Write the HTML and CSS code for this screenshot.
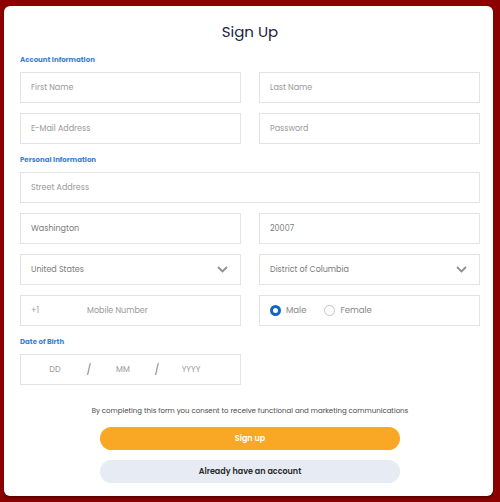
FILE: index.html
```html
<!DOCTYPE html>
<html lang="en">
<head>
    <meta charset="UTF-8">
    <title>Sign Up</title>
    <link rel="stylesheet" href="styles.css">
</head>
<body>
    <div class="card">
        <h1 class="title">Sign Up</h1>
        <form class="form">
            <div class="label">Account Information</div>
            <div class="row">
                <input class="field" type="text" placeholder="First Name">
                <input class="field" type="text" placeholder="Last Name">
            </div>
            <div class="row">
                <input class="field" type="text" placeholder="E-Mail Address">
                <input class="field" type="password" placeholder="Password">
            </div>

            <div class="label">Personal Information</div>
            <div class="row one">
                <input class="field" type="text" placeholder="Street Address">
            </div>
            <div class="row">
                <input class="field" type="text" value="Washington">
                <input class="field" type="text" value="20007">
            </div>
            <div class="row">
                <div class="field select">
                    <span>United States</span>
                    <svg width="11" height="7" viewBox="0 0 11 7"><path d="M1 1l4.5 4.5L10 1" fill="none" stroke="#8a8f99" stroke-width="1.8"/></svg>
                </div>
                <div class="field select">
                    <span>District of Columbia</span>
                    <svg width="11" height="7" viewBox="0 0 11 7"><path d="M1 1l4.5 4.5L10 1" fill="none" stroke="#8a8f99" stroke-width="1.8"/></svg>
                </div>
            </div>
            <div class="row">
                <div class="field phone">
                    <span class="code">+1</span>
                    <span>Mobile Number</span>
                </div>
                <div class="field gender">
                    <label class="radio"><span class="dot on"></span>Male</label>
                    <label class="radio"><span class="dot"></span>Female</label>
                </div>
            </div>

            <div class="label">Date of Birth</div>
            <div class="row">
                <div class="field dob">
                    <span>DD</span>
                    <span class="slash">/</span>
                    <span>MM</span>
                    <span class="slash">/</span>
                    <span>YYYY</span>
                </div>
            </div>

            <p class="consent">By completing this form you consent to receive functional and marketing communications</p>
            <div class="btns">
                <button type="button" class="btn primary">Sign up</button>
                <button type="button" class="btn second">Already have an account</button>
            </div>
        </form>
    </div>
</body>
</html>
```

FILE: styles.css
```css
* {
    padding: 0;
    margin: 0;
    box-sizing: border-box;
}
body {
    background: #8b0000;
    font-family: "Poppins", "Open Sans", "DejaVu Sans", sans-serif;
    padding: 6px 7px 6px 4px;
}
.card {
    background: #fff;
    border-radius: 6px;
    box-shadow: 0 2px 2px rgba(0,0,0,.35);
    height: 490px;
    padding: 14px 13px 0 16px;
}
.title {
    text-align: center;
    font-size: 15px;
    font-weight: 400;
    color: #1d2340;
    line-height: 24px;
    margin-bottom: 10px;
}
.label {
    font-size: 7px;
    font-weight: 700;
    color: #3b7fd0;
    line-height: 10px;
    padding-top: 1px;
    margin-bottom: 7px;
}
.row {
    display: grid;
    grid-template-columns: 1fr 1fr;
    gap: 18px;
    margin-bottom: 10px;
}
.row.one {
    grid-template-columns: 1fr;
}
.field {
    height: 31px;
    border: 1px solid #e3e3e3;
    padding: 0 10px;
    font-family: inherit;
    font-size: 8px;
    color: #7b7b7b;
    outline: none;
    display: flex;
    align-items: center;
    background: #fff;
}
.field::placeholder {
    color: #9a9a9a;
}
.select {
    justify-content: space-between;
    padding-right: 12px;
}
.phone .code {
    width: 56px;
    color: #9a9a9a;
}
.phone span {
    color: #9a9a9a;
}
.gender {
    gap: 18px;
    font-size: 8.5px;
    color: #888;
}
.radio {
    display: flex;
    align-items: center;
    gap: 5px;
}
.dot {
    width: 11px;
    height: 11px;
    border-radius: 50%;
    border: 1px solid #c4c4c4;
}
.dot.on {
    border: 3.5px solid #1565c0;
}
.dob {
    padding-left: 17px;
    color: #9a9a9a;
}
.dob span {
    width: 34px;
    text-align: center;
}
.dob .slash {
    color: #777;
    font-size: 10px;
}
.consent {
    text-align: center;
    font-size: 7px;
    color: #4a4a4a;
    margin-top: 21px;
    line-height: 10px;
}
.btns {
    display: flex;
    flex-direction: column;
    align-items: center;
    gap: 10px;
    margin-top: 11px;
}
.btn {
    width: 300px;
    height: 23px;
    border: none;
    border-radius: 12px;
    font-family: inherit;
    font-size: 8px;
    font-weight: 600;
}
.primary {
    background: #f9a825;
    color: #fff;
}
.second {
    background: #e6ebf4;
    color: #2a2a2a;
}
```
